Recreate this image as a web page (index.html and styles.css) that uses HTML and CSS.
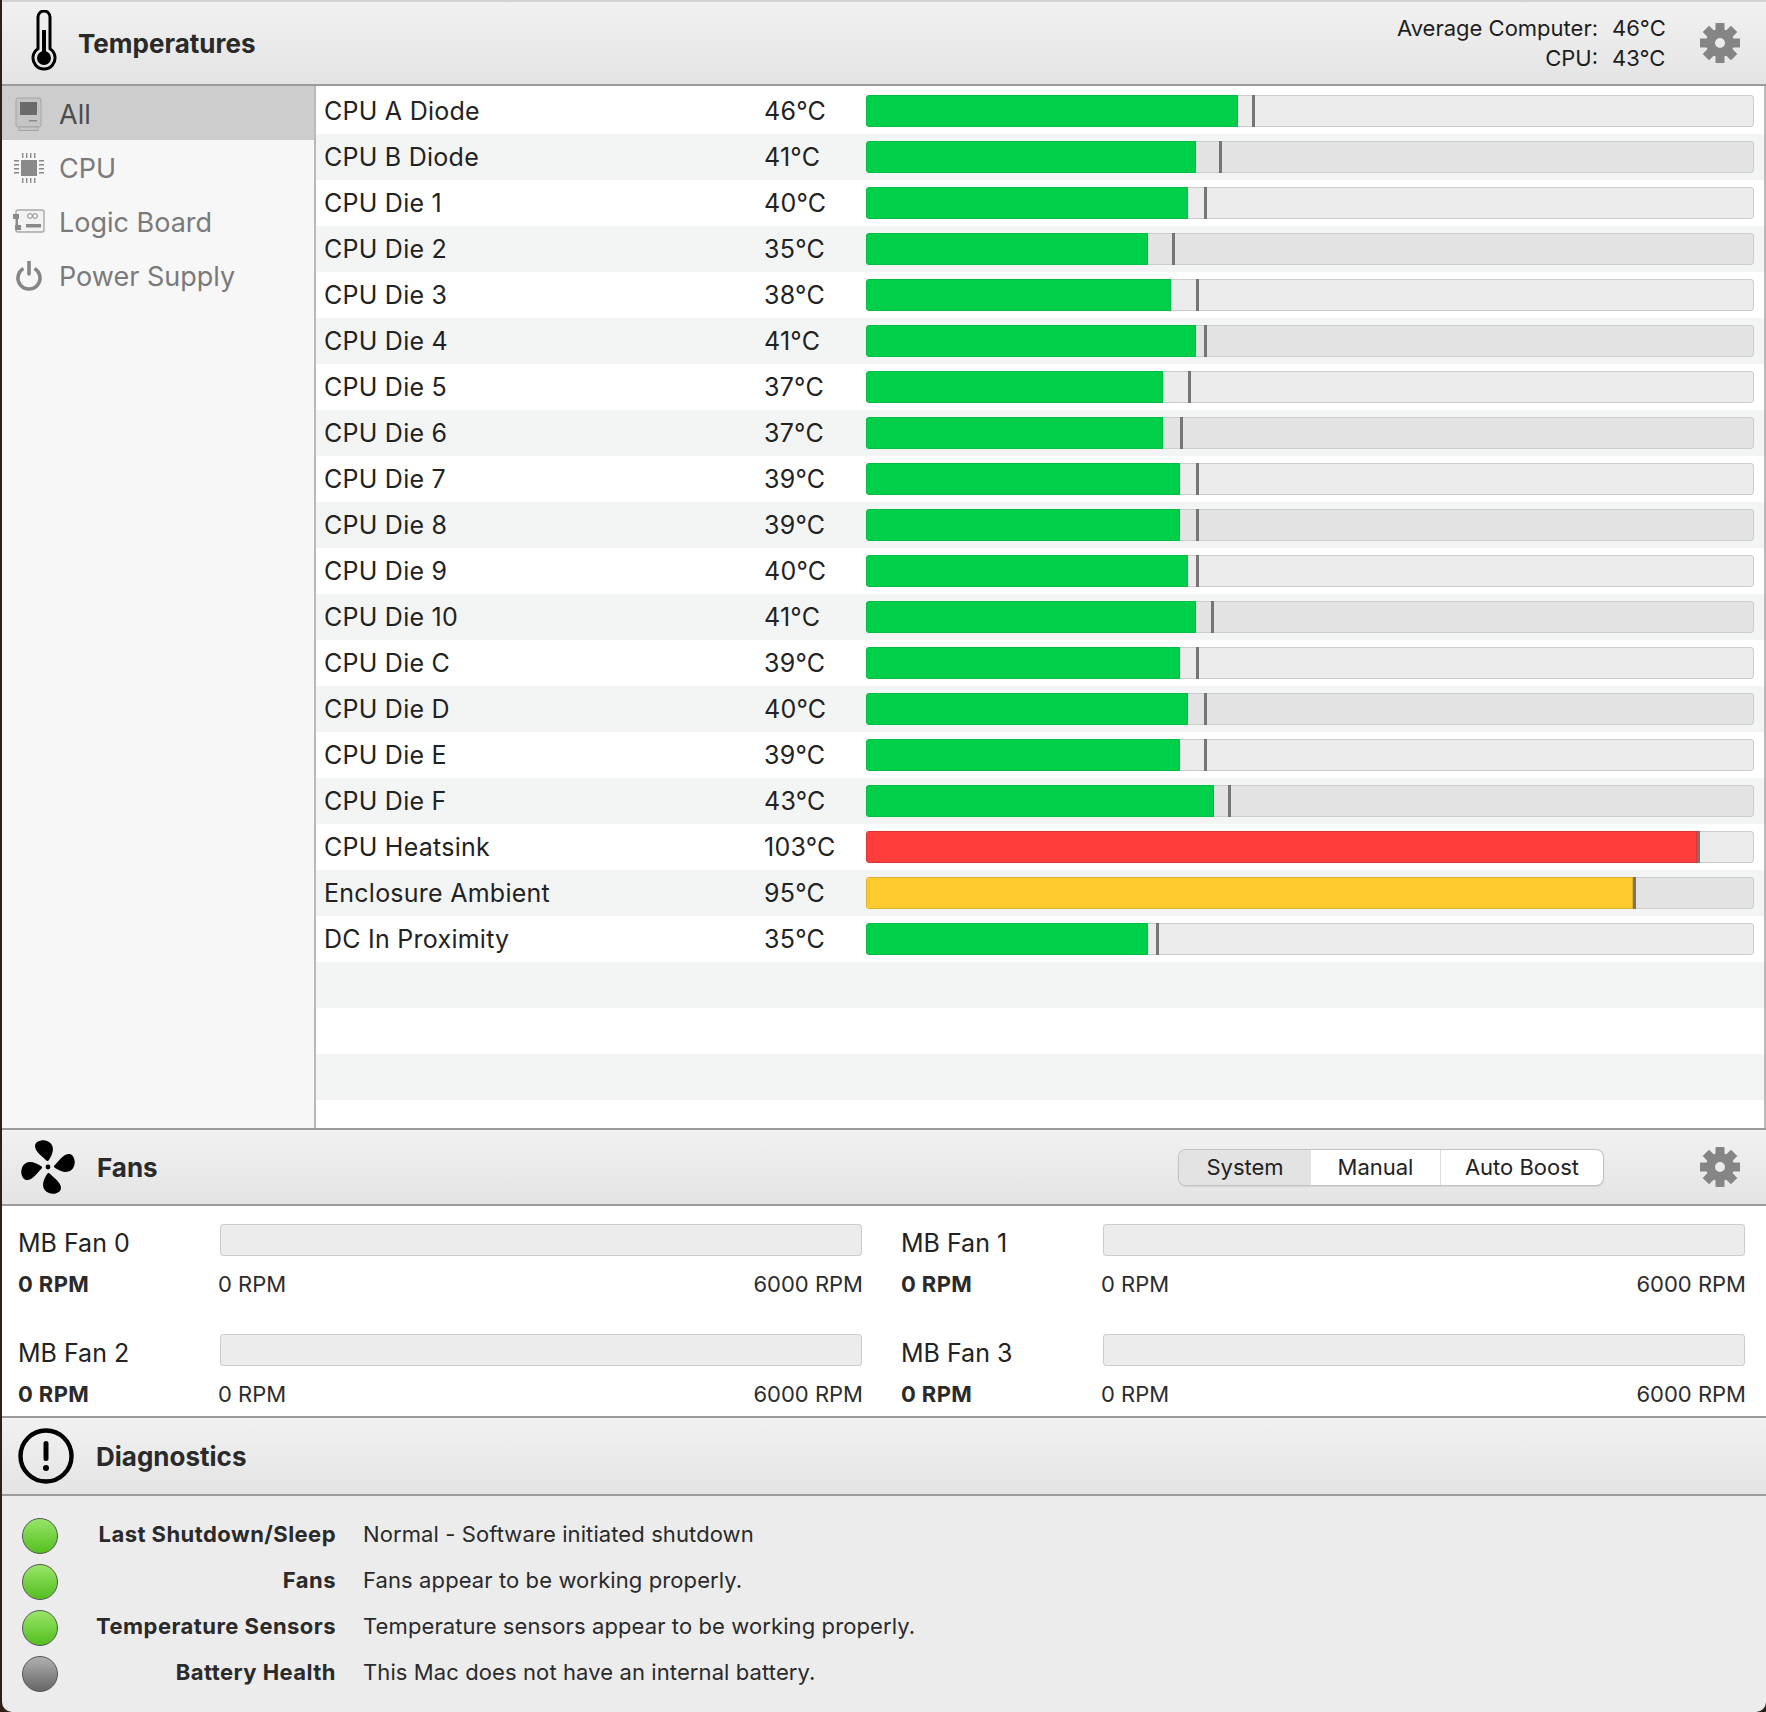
FILE: index.html
```html
<!DOCTYPE html>
<html lang="en">
<head>
  <meta charset="UTF-8">
  <title>Temperatures</title>
  <link rel="stylesheet" href="styles.css">
</head>
<body>
<div class="window">

  <header class="head head-temps">
    <svg class="icon-thermo" width="28" height="62" viewBox="0 0 28 62">
      <path d="M8 7a6 6 0 0 1 12 0V38.800A11 11 0 1 1 8 38.800Z" fill="none" stroke="#000" stroke-width="3"/>
      <rect x="12" y="20" width="4" height="24" fill="#000"/>
      <circle cx="14" cy="48" r="7" fill="#000"/>
    </svg>
    <h2 class="head-title title-temps">Temperatures</h2>
    <div class="summary">
      <span>Average Computer:</span><span>46°C</span>
      <span>CPU:</span><span>43°C</span>
    </div>
    <svg class="gear" width="40" height="40" viewBox="-20 -20 40 40">
      <circle r="9.5" fill="none" stroke="#858585" stroke-width="9"/>
      <g fill="#858585">
        <rect x="-4.5" y="-20" width="9" height="8"/>
        <rect x="-4.5" y="-20" width="9" height="8" transform="rotate(45)"/>
        <rect x="-4.5" y="-20" width="9" height="8" transform="rotate(90)"/>
        <rect x="-4.5" y="-20" width="9" height="8" transform="rotate(135)"/>
        <rect x="-4.5" y="-20" width="9" height="8" transform="rotate(180)"/>
        <rect x="-4.5" y="-20" width="9" height="8" transform="rotate(225)"/>
        <rect x="-4.5" y="-20" width="9" height="8" transform="rotate(270)"/>
        <rect x="-4.5" y="-20" width="9" height="8" transform="rotate(315)"/>
      </g>
    </svg>
  </header>

  <div class="temps">
    <nav class="sidebar">
      <a class="side-item active">
        <svg width="28" height="34" viewBox="0 0 28 34">
          <rect x="1" y="1" width="25" height="29" rx="2" fill="#c4c4c4" stroke="#a4a4a4"/>
          <rect x="5" y="5" width="17" height="13" fill="#6a6a6a"/>
          <rect x="14" y="23" width="8" height="1.500" fill="#8a8a8a"/>
          <rect x="4" y="30" width="19" height="3.500" fill="#c4c4c4" stroke="#a4a4a4"/>
        </svg>
        All
      </a>
      <a class="side-item">
        <svg width="32" height="32" viewBox="0 0 32 32" fill="#8a8a8a">
          <rect x="8" y="8" width="16" height="16"/>
          <path d="M1 8h5v1.600H1zM1 12h5v1.600H1zM1 16h5v1.600H1zM1 20h5v1.600H1zM26 8h5v1.600h-5zM26 12h5v1.600h-5zM26 16h5v1.600h-5zM26 20h5v1.600h-5z"/>
          <path d="M9 1h1.400v5H9zM13 1h1.400v5H13zM17 1h1.400v5H17zM21 1h1.400v5H21zM9 26h1.400v5H9zM13 26h1.400v5H13zM17 26h1.400v5H17zM21 26h1.400v5H21z"/>
        </svg>
        CPU
      </a>
      <a class="side-item">
        <svg width="32" height="26" viewBox="0 0 32 26">
          <rect x="3" y="1" width="28" height="22" rx="2" fill="#f2f2f2" stroke="#a8a8a8" stroke-width="1.400"/>
          <rect x="0" y="5" width="6" height="5" fill="#8a8a8a"/>
          <rect x="2" y="16" width="6" height="5" fill="#8a8a8a"/>
          <rect x="3" y="9" width="2" height="8" fill="#8a8a8a"/>
          <rect x="13" y="15" width="15" height="3.500" fill="#8a8a8a"/>
          <circle cx="17" cy="7" r="2.400" fill="none" stroke="#8a8a8a" stroke-width="1"/>
          <circle cx="22" cy="7" r="2.400" fill="none" stroke="#8a8a8a" stroke-width="1"/>
        </svg>
        Logic Board
      </a>
      <a class="side-item">
        <svg width="28" height="30" viewBox="0 0 28 30" fill="none" stroke="#858585" stroke-width="3.600">
          <path d="M8.500 7.500a11 11 0 1 0 11 0"/>
          <path d="M14 1v12" stroke-linecap="round"/>
        </svg>
        Power Supply
      </a>
    </nav>

    <div class="sensors">
      <div class="sensor"><span class="sensor-name">CPU A Diode</span><span class="sensor-val">46°C</span><div class="bar"><div class="fill green" style="width:372px"></div><i class="mark" style="left:386px"></i></div></div>
      <div class="sensor"><span class="sensor-name">CPU B Diode</span><span class="sensor-val">41°C</span><div class="bar"><div class="fill green" style="width:330px"></div><i class="mark" style="left:353px"></i></div></div>
      <div class="sensor"><span class="sensor-name">CPU Die 1</span><span class="sensor-val">40°C</span><div class="bar"><div class="fill green" style="width:322px"></div><i class="mark" style="left:338px"></i></div></div>
      <div class="sensor"><span class="sensor-name">CPU Die 2</span><span class="sensor-val">35°C</span><div class="bar"><div class="fill green" style="width:282px"></div><i class="mark" style="left:306px"></i></div></div>
      <div class="sensor"><span class="sensor-name">CPU Die 3</span><span class="sensor-val">38°C</span><div class="bar"><div class="fill green" style="width:305px"></div><i class="mark" style="left:330px"></i></div></div>
      <div class="sensor"><span class="sensor-name">CPU Die 4</span><span class="sensor-val">41°C</span><div class="bar"><div class="fill green" style="width:330px"></div><i class="mark" style="left:338px"></i></div></div>
      <div class="sensor"><span class="sensor-name">CPU Die 5</span><span class="sensor-val">37°C</span><div class="bar"><div class="fill green" style="width:297px"></div><i class="mark" style="left:322px"></i></div></div>
      <div class="sensor"><span class="sensor-name">CPU Die 6</span><span class="sensor-val">37°C</span><div class="bar"><div class="fill green" style="width:297px"></div><i class="mark" style="left:314px"></i></div></div>
      <div class="sensor"><span class="sensor-name">CPU Die 7</span><span class="sensor-val">39°C</span><div class="bar"><div class="fill green" style="width:314px"></div><i class="mark" style="left:330px"></i></div></div>
      <div class="sensor"><span class="sensor-name">CPU Die 8</span><span class="sensor-val">39°C</span><div class="bar"><div class="fill green" style="width:314px"></div><i class="mark" style="left:330px"></i></div></div>
      <div class="sensor"><span class="sensor-name">CPU Die 9</span><span class="sensor-val">40°C</span><div class="bar"><div class="fill green" style="width:322px"></div><i class="mark" style="left:330px"></i></div></div>
      <div class="sensor"><span class="sensor-name">CPU Die 10</span><span class="sensor-val">41°C</span><div class="bar"><div class="fill green" style="width:330px"></div><i class="mark" style="left:345px"></i></div></div>
      <div class="sensor"><span class="sensor-name">CPU Die C</span><span class="sensor-val">39°C</span><div class="bar"><div class="fill green" style="width:314px"></div><i class="mark" style="left:330px"></i></div></div>
      <div class="sensor"><span class="sensor-name">CPU Die D</span><span class="sensor-val">40°C</span><div class="bar"><div class="fill green" style="width:322px"></div><i class="mark" style="left:338px"></i></div></div>
      <div class="sensor"><span class="sensor-name">CPU Die E</span><span class="sensor-val">39°C</span><div class="bar"><div class="fill green" style="width:314px"></div><i class="mark" style="left:338px"></i></div></div>
      <div class="sensor"><span class="sensor-name">CPU Die F</span><span class="sensor-val">43°C</span><div class="bar"><div class="fill green" style="width:348px"></div><i class="mark" style="left:362px"></i></div></div>
      <div class="sensor"><span class="sensor-name">CPU Heatsink</span><span class="sensor-val">103°C</span><div class="bar"><div class="fill red" style="width:831px"></div><i class="mark" style="left:831px"></i></div></div>
      <div class="sensor"><span class="sensor-name">Enclosure Ambient</span><span class="sensor-val">95°C</span><div class="bar"><div class="fill yellow" style="width:767px"></div><i class="mark" style="left:767px"></i></div></div>
      <div class="sensor"><span class="sensor-name">DC In Proximity</span><span class="sensor-val">35°C</span><div class="bar"><div class="fill green" style="width:282px"></div><i class="mark" style="left:290px"></i></div></div>
      <div class="sensor"></div>
      <div class="sensor"></div>
      <div class="sensor"></div>
    </div>
  </div>

  <header class="head head-fans">
    <svg class="icon-fan" width="56" height="56" viewBox="-28 -28 56 56">
      <g fill="#000">
        <path d="M-1-6C-5-10-13-15-13-21C-13-26-5-28-1-26C5-24 6-18 4-13C3-10 1-7 0-6Z"/>
        <path d="M-1-6C-5-10-13-15-13-21C-13-26-5-28-1-26C5-24 6-18 4-13C3-10 1-7 0-6Z" transform="rotate(90)"/>
        <path d="M-1-6C-5-10-13-15-13-21C-13-26-5-28-1-26C5-24 6-18 4-13C3-10 1-7 0-6Z" transform="rotate(180)"/>
        <path d="M-1-6C-5-10-13-15-13-21C-13-26-5-28-1-26C5-24 6-18 4-13C3-10 1-7 0-6Z" transform="rotate(270)"/>
        <circle r="2.400"/>
      </g>
    </svg>
    <h2 class="head-title title-fans">Fans</h2>
    <div class="segmented">
      <span class="seg seg-system">System</span>
      <span class="seg seg-manual">Manual</span>
      <span class="seg seg-auto">Auto Boost</span>
    </div>
    <svg class="gear" width="40" height="40" viewBox="-20 -20 40 40">
      <circle r="9.500" fill="none" stroke="#858585" stroke-width="9"/>
      <g fill="#858585">
        <rect x="-4.500" y="-20" width="9" height="8"/>
        <rect x="-4.500" y="-20" width="9" height="8" transform="rotate(45)"/>
        <rect x="-4.500" y="-20" width="9" height="8" transform="rotate(90)"/>
        <rect x="-4.500" y="-20" width="9" height="8" transform="rotate(135)"/>
        <rect x="-4.500" y="-20" width="9" height="8" transform="rotate(180)"/>
        <rect x="-4.500" y="-20" width="9" height="8" transform="rotate(225)"/>
        <rect x="-4.500" y="-20" width="9" height="8" transform="rotate(270)"/>
        <rect x="-4.500" y="-20" width="9" height="8" transform="rotate(315)"/>
      </g>
    </svg>
  </header>

  <section class="fans">
    <div class="fan">
      <span class="fan-name">MB Fan 0</span><div class="fan-bar"></div>
      <b class="fan-rpm">0 RPM</b><div class="fan-scale"><span>0 RPM</span><span>6000 RPM</span></div>
    </div>
    <div class="fan">
      <span class="fan-name">MB Fan 1</span><div class="fan-bar"></div>
      <b class="fan-rpm">0 RPM</b><div class="fan-scale"><span>0 RPM</span><span>6000 RPM</span></div>
    </div>
    <div class="fan">
      <span class="fan-name">MB Fan 2</span><div class="fan-bar"></div>
      <b class="fan-rpm">0 RPM</b><div class="fan-scale"><span>0 RPM</span><span>6000 RPM</span></div>
    </div>
    <div class="fan">
      <span class="fan-name">MB Fan 3</span><div class="fan-bar"></div>
      <b class="fan-rpm">0 RPM</b><div class="fan-scale"><span>0 RPM</span><span>6000 RPM</span></div>
    </div>
  </section>

  <header class="head head-diag">
    <svg class="icon-diag" width="56" height="56" viewBox="0 0 56 56">
      <circle cx="28" cy="28" r="25.500" fill="none" stroke="#000" stroke-width="4.400"/>
      <rect x="25.500" y="13" width="5" height="20" rx="2.500" fill="#000"/>
      <circle cx="28" cy="40" r="3" fill="#000"/>
    </svg>
    <h2 class="head-title title-diag">Diagnostics</h2>
  </header>

  <section class="diag">
    <div class="diag-row"><i class="light ok"></i><b class="diag-label">Last Shutdown/Sleep</b><span class="diag-text">Normal - Software initiated shutdown</span></div>
    <div class="diag-row"><i class="light ok"></i><b class="diag-label">Fans</b><span class="diag-text">Fans appear to be working properly.</span></div>
    <div class="diag-row"><i class="light ok"></i><b class="diag-label">Temperature Sensors</b><span class="diag-text">Temperature sensors appear to be working properly.</span></div>
    <div class="diag-row"><i class="light off"></i><b class="diag-label">Battery Health</b><span class="diag-text">This Mac does not have an internal battery.</span></div>
  </section>

</div>
</body>
</html>
```

FILE: styles.css
```css
* { box-sizing: border-box; }

html, body { margin: 0; height: 100%; }

body {
  background: #2e2018;
  font-family: Inter, "Noto Sans", sans-serif;
  color: #222;
}

.window {
  width: 1764px;
  height: 1712px;
  margin-left: 2px;
  background: #ececec;
  border-top: 2px solid #d2d2d2;
  border-bottom-left-radius: 10px;
  border-bottom-right-radius: 10px;
  overflow: hidden;
  display: flex;
  flex-direction: column;
}

/* section headers */
.head {
  display: flex;
  align-items: center;
  flex: none;
  background: linear-gradient(#f1f1f1, #e4e4e4);
  border-bottom: 2px solid #9b9b9b;
}
.head-temps { height: 84px; padding: 0 26px 0 28px; }
.head-fans { height: 78px; padding: 0 26px 0 18px; border-top: 2px solid #9b9b9b; }
.head-diag { height: 80px; padding: 0 0 0 16px; border-top: 2px solid #9b9b9b; }

.head-title { margin: 0; font-size: 26px; font-weight: 700; color: #2a2a2a; }
.title-temps { margin-left: 20px; }
.title-fans { margin-left: 21px; }
.title-diag { margin-left: 22px; }
.icon-thermo { margin-bottom: 4px; flex: none; }

.summary {
  margin-left: auto;
  margin-right: 20px;
  display: grid;
  grid-template-columns: auto 68px;
  column-gap: 14px;
  row-gap: 3px;
  text-align: right;
  font-size: 22px;
  line-height: 27px;
  color: #1e1e1e;
}
.summary span:nth-child(even) { text-align: left; }

.gear { flex: none; }

.segmented {
  display: flex;
  margin-left: auto;
  margin-right: 97px;
  height: 35px;
  width: 424px;
  border-radius: 7px;
  background: #fff;
  box-shadow: 0 0 0 1px #c2c2c2, 0 1px 2px #aaa;
  overflow: hidden;
  font-size: 22px;
  line-height: 34px;
  text-align: center;
}
.seg-system { width: 132px; background: #e3e3e3; }
.seg-manual { width: 130px; border-right: 1px solid #ddd; }
.seg-auto { flex: 1; }

/* temperature panel */
.temps { display: flex; height: 1042px; flex: none; }

.sidebar {
  width: 314px;
  flex: none;
  background: #f7f7f7;
  border-right: 2px solid #b9b9b9;
}
.side-item {
  height: 54px;
  padding: 2px 0 0 11px;
  display: flex;
  align-items: center;
  font-size: 27px;
  color: #7a7a7a;
}
.side-item svg { width: 32px; margin-right: 14px; flex: none; }
.side-item.active { background: #cdcdcd; color: #4c4c4c; }

.sensors {
  flex: 1;
  background: #fff;
  padding-top: 2px;
  border-right: 2px solid #b9b9b9;
}
.sensor {
  height: 46px;
  display: flex;
  align-items: center;
  padding: 0 8px;
  font-size: 25px;
  letter-spacing: 0.25px;
  color: #222;
}
.sensor:nth-child(even) { background: #f3f5f4; }
.sensor-name { width: 440px; flex: none; }
.sensor-val { width: 102px; flex: none; }

.bar {
  position: relative;
  width: 888px;
  height: 32px;
  background: #ececec;
  box-shadow: inset 0 0 0 1px #cdcdcd;
  border-radius: 4px;
  overflow: hidden;
}
.sensor:nth-child(even) .bar { background: #e2e3e2; }
.fill { height: 100%; }
.green { background: #00cf4a; box-shadow: inset 0 0 0 1px #00bd43; }
.red { background: #ff3e3c; box-shadow: inset 0 0 0 1px #dc3533; }
.yellow { background: #ffcb2f; box-shadow: inset 0 0 0 1px #e0b02a; }
.mark { position: absolute; top: 0; width: 3px; height: 32px; background: #757575; }

/* fans panel */
.fans {
  flex: none;
  height: 210px;
  background: #fff;
  padding: 18px 0 0 16px;
  display: grid;
  grid-template-columns: 846px 1fr;
  grid-auto-rows: 110px;
  column-gap: 37px;
}
.fan {
  display: grid;
  grid-template-columns: 202px 1fr;
  grid-template-rows: 32px 26px;
  row-gap: 15px;
  align-items: center;
  align-content: start;
}
.fan-name { font-size: 25px; position: relative; top: 3px; }
.fan-bar {
  height: 32px;
  background: #ececec;
  box-shadow: inset 0 0 0 1px #cdcdcd;
  border-radius: 4px;
  width: 642px;
}
.fan-rpm { font-size: 22px; font-weight: 700; letter-spacing: 0.4px; color: #2a2a2a; }
.fan-scale {
  display: flex;
  justify-content: space-between;
  width: 645px;
  margin-left: -2px;
  font-size: 22px;
  color: #2c2c2c;
}

/* diagnostics */
.diag { flex: 1; padding-top: 17px; font-size: 22px; color: #2a2a2a; }
.diag-row { height: 46px; display: flex; align-items: center; }
.light {
  width: 36px;
  height: 36px;
  margin-left: 20px;
  border-radius: 50%;
  border: 1px solid #555;
  flex: none;
}
.ok { background: linear-gradient(#98e568, #54bf20); }
.off { background: linear-gradient(#b0b0b0, #666); }
.diag-label {
  width: 278px;
  flex: none;
  margin: 0 27px 5px 0;
  text-align: right;
  font-weight: 700;
  letter-spacing: 0.45px;
}
.diag-text { margin-bottom: 5px; letter-spacing: 0.1px; }
```
